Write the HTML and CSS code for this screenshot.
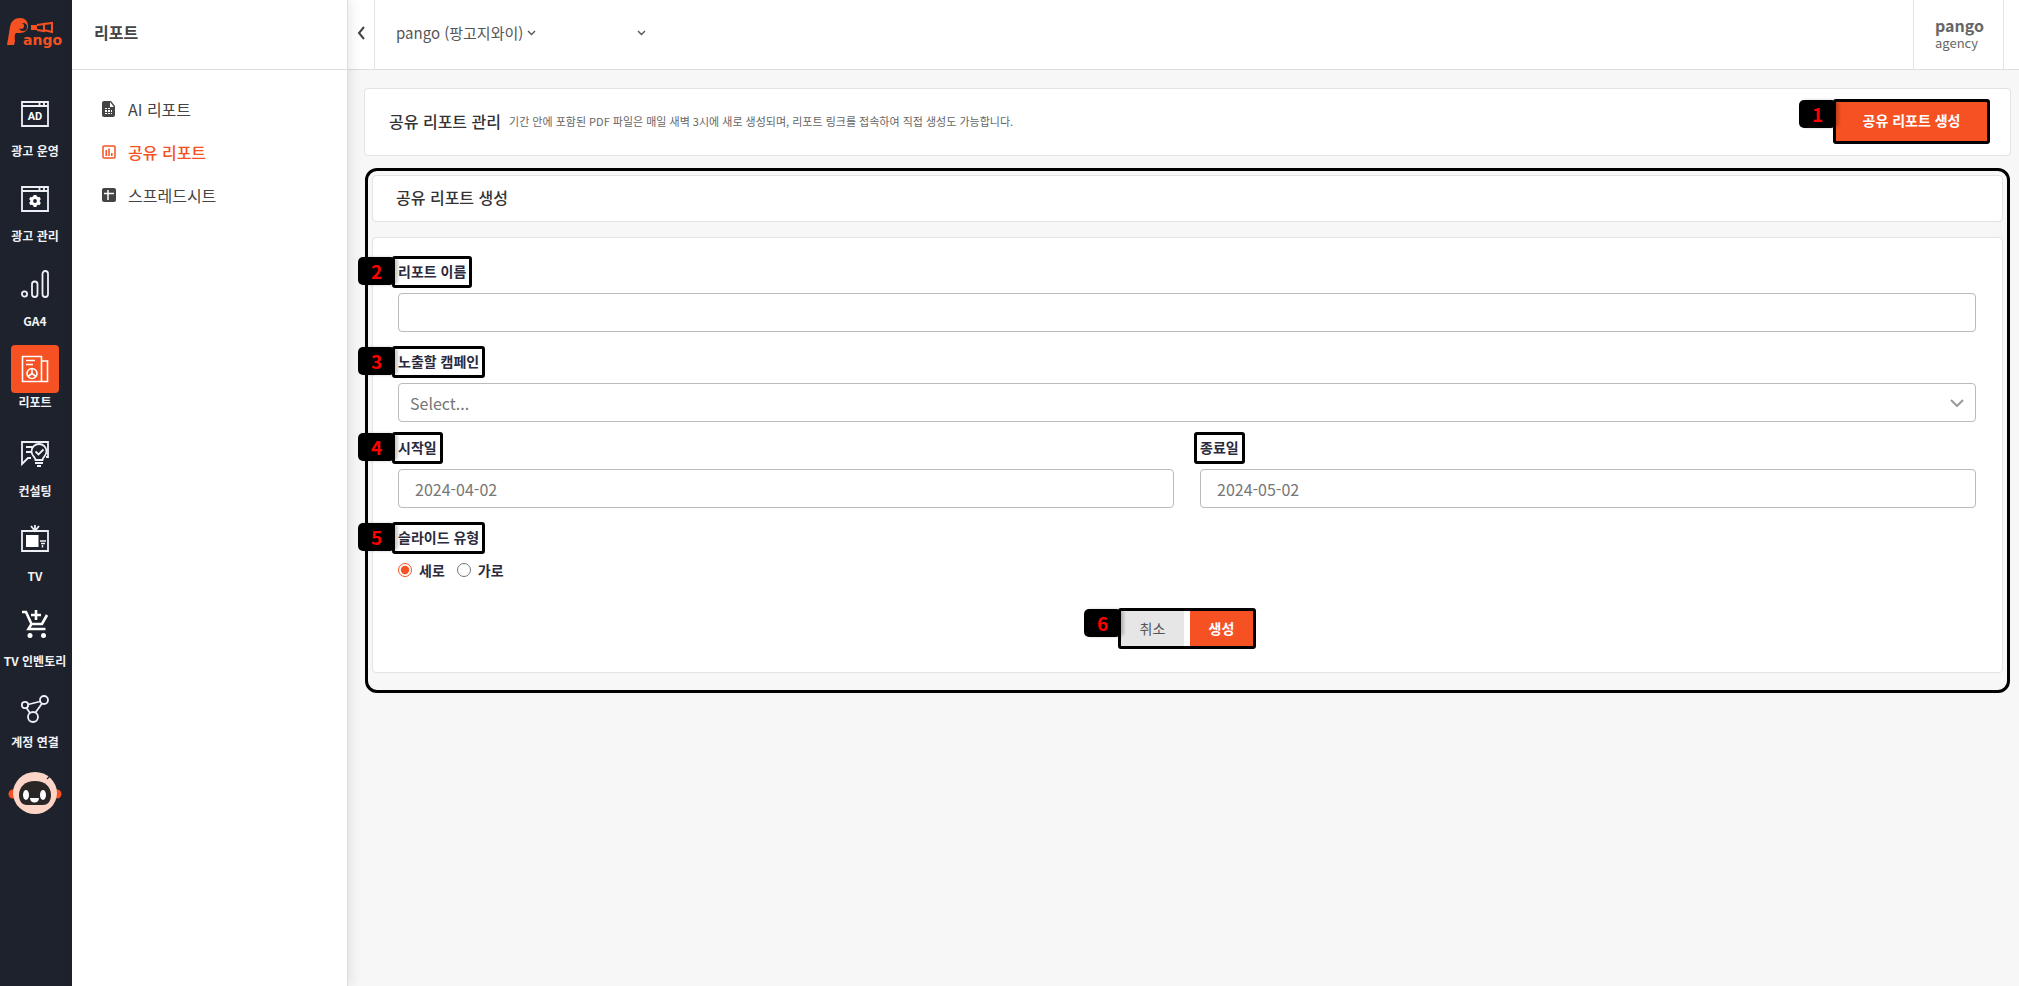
FILE: index.html
```html
<!DOCTYPE html>
<html lang="ko">
<head>
    <meta charset="UTF-8">
    <meta name="viewport" content="width=device-width, initial-scale=1.0">
    <title>공유 리포트 - pango</title>
    <link rel="stylesheet" href="styles.css">
</head>
<body>
    <div class="app">

        <!-- Main navigation -->
        <nav class="sidebar">
            <a class="logo" href="#">
                <svg width="60" height="36" viewBox="0 0 60 36" aria-label="Pango">
                    <path fill="#f55122" d="M1 28 L4 10 C5 4 9 1 14 1 C19 1 22 4 22 9 C22 13 19 16 14 16 L10 16 C8 18 9 21 9 24 L8 28 Z"/>
                    <circle cx="17" cy="10" r="4" fill="#1e222d"/>
                    <circle cx="15" cy="9" r="3" fill="#f55122"/>
                    <path fill="#f55122" d="M25 8h6v5h-6z"/>
                    <path fill="none" stroke="#f55122" stroke-width="2" d="M31 8l7-1v7l-7-1M38 7l8-1v9l-8-2"/>
                    <text x="17" y="28" class="logo-text">ango</text>
                </svg>
            </a>
            <ul class="nav-list">
                <li>
                    <a class="nav-item" href="#">
                        <span class="nav-icon">
                            <svg width="28" height="28" viewBox="0 0 28 28">
                                <path fill="none" stroke="#eef0f6" stroke-width="1.8" d="M1 2h26v24H1zM1 6h26M18.500 2v4M23 2v4"/>
                                <text x="14" y="20" text-anchor="middle" class="icon-text">AD</text>
                            </svg>
                        </span>
                        <span class="nav-label">광고 운영</span>
                    </a>
                </li>
                <li>
                    <a class="nav-item" href="#">
                        <span class="nav-icon">
                            <svg width="28" height="28" viewBox="0 0 28 28">
                                <path fill="none" stroke="#eef0f6" stroke-width="1.8" d="M1 2h26v24H1zM1 6h26M18.500 2v4M23 2v4"/>
                                <circle cx="14" cy="16" r="3.4" fill="none" stroke="#fff" stroke-width="3"/>
                                <path stroke="#fff" stroke-width="3" d="M14 10v2M14 20v2M8.800 13l1.700 1M17.500 18l1.700 1M8.800 19l1.700-1M17.500 14l1.700-1"/>
                            </svg>
                        </span>
                        <span class="nav-label">광고 관리</span>
                    </a>
                </li>
                <li>
                    <a class="nav-item" href="#">
                        <span class="nav-icon">
                            <svg width="28" height="28" viewBox="0 0 28 28" fill="none" stroke="#eef0f6" stroke-width="1.800">
                                <circle cx="3.500" cy="24" r="2.600"/>
                                <rect x="11" y="11.500" width="5.500" height="15.500" rx="2.700"/>
                                <rect x="21.500" y="1" width="5.500" height="26" rx="2.700"/>
                            </svg>
                        </span>
                        <span class="nav-label">GA4</span>
                    </a>
                </li>
                <li>
                    <a class="nav-item active" href="#">
                        <span class="nav-icon">
                            <svg width="28" height="28" viewBox="0 0 28 28" fill="none" stroke="#fff" stroke-width="1.600">
                                <path d="M1.500 1.500h19v25h-19zM20.500 6h6v20.500h-6M5 5.500h9M5 9.500h7"/>
                                <circle cx="11" cy="18.500" r="5"/>
                                <path d="M11 13.500v5l-4 3M11 18.500l4 3"/>
                            </svg>
                        </span>
                        <span class="nav-label">리포트</span>
                    </a>
                </li>
                <li>
                    <a class="nav-item" href="#">
                        <span class="nav-icon">
                            <svg width="28" height="28" viewBox="0 0 28 28" fill="none" stroke="#eef0f6" stroke-width="1.800">
                                <path d="M10 18H7l-6 6V2h26v15h-2M5 7h7M5 12h5"/>
                                <path d="M14.500 20c0-3-4-4-4-8.500a7.500 7.500 0 0 1 15 0c0 4.500-4 5.500-4 8.500zM14 23h8M16 26h4"/>
                                <path d="M14.500 11.500l3 3l5-5"/>
                            </svg>
                        </span>
                        <span class="nav-label">컨설팅</span>
                    </a>
                </li>
                <li>
                    <a class="nav-item" href="#">
                        <span class="nav-icon">
                            <svg width="28" height="28" viewBox="0 0 28 28">
                                <path fill="none" stroke="#eef0f6" stroke-width="1.800" d="M1 6h26v20H1zM10 1l4 5l4-5M14 0v6"/>
                                <path fill="#fff" d="M5 10h12.500v12H5z"/>
                                <path fill="none" stroke="#eef0f6" stroke-width="1.400" d="M19 16h6M20 18.500h4M21.500 20v2.500"/>
                            </svg>
                        </span>
                        <span class="nav-label">TV</span>
                    </a>
                </li>
                <li>
                    <a class="nav-item" href="#">
                        <span class="nav-icon">
                            <svg width="28" height="28" viewBox="0 0 28 28">
                                <path fill="none" stroke="#fff" stroke-width="2.600" d="M1 2h4l5.500 12h10.500L26 5M10.500 14l-3 5h17M15 0v10M10 5h10"/>
                                <circle cx="9" cy="25.500" r="2.500" fill="#fff"/>
                                <circle cx="22.500" cy="25.500" r="2.500" fill="#fff"/>
                            </svg>
                        </span>
                        <span class="nav-label">TV 인벤토리</span>
                    </a>
                </li>
                <li>
                    <a class="nav-item compact" href="#">
                        <span class="nav-icon">
                            <svg width="28" height="28" viewBox="0 0 28 28" fill="none" stroke="#eef0f6" stroke-width="1.800">
                                <circle cx="4" cy="10" r="3.200"/>
                                <circle cx="23" cy="5" r="4"/>
                                <circle cx="12" cy="22" r="5"/>
                                <path d="M7 9.500l12-3M5.500 13l3.500 5M21 8.500l-6.500 9"/>
                            </svg>
                        </span>
                        <span class="nav-label">계정 연결</span>
                    </a>
                </li>
            </ul>
            <button class="bot-button" type="button" aria-label="챗봇">
                <svg width="54" height="44" viewBox="0 0 54 44">
                    <circle cx="5" cy="23" r="4.500" fill="#f55122"/>
                    <circle cx="49" cy="23" r="4.500" fill="#f55122"/>
                    <ellipse cx="27" cy="22" rx="22" ry="21" fill="#fdd5c6"/>
                    <path fill="#2a2626" d="M27 10c10 0 16 6 16 14c0 7-4 10-8 10H19c-5 0-8-4-8-10c0-8 6-14 16-14z"/>
                    <ellipse cx="18" cy="24" rx="3" ry="5" fill="#fff"/>
                    <ellipse cx="35" cy="24" rx="3" ry="5" fill="#fff"/>
                    <path fill="#fff" d="M22 27h9c0 6-9 6-9 0z"/>
                    <path stroke="#2a2626" stroke-width="1.200" d="M39 8l3-3"/>
                </svg>
            </button>
        </nav>

        <!-- Report sub menu -->
        <aside class="submenu">
            <h1 class="submenu-title">리포트</h1>
            <ul class="submenu-list">
                <li>
                    <a class="submenu-item" href="#">
                        <svg width="14" height="16" viewBox="0 0 14 16">
                            <path fill="#444" d="M2 0h7l4 5v9a2 2 0 0 1-2 2H2a2 2 0 0 1-2-2V2a2 2 0 0 1 2-2z"/>
                            <path fill="#fff" d="M8 1v5h4zM3 7h2v1H3zM6 7h2v1H6zM3 9h2v2H3zM6 9h2v2H6zM9 9h1v2H9zM3 12h2v1H3zM6 12h2v1H6zM9 12h1v1H9z"/>
                        </svg>
                        AI 리포트
                    </a>
                </li>
                <li>
                    <a class="submenu-item active" href="#">
                        <svg width="14" height="14" viewBox="0 0 14 14" fill="none" stroke="currentColor" stroke-width="1.500">
                            <rect x="1" y="1" width="12" height="12" rx="1"/>
                            <path d="M4.200 5v6M7 3.500v7.500M9.800 8v3"/>
                        </svg>
                        공유 리포트
                    </a>
                </li>
                <li>
                    <a class="submenu-item" href="#">
                        <svg width="14" height="14" viewBox="0 0 14 14">
                            <rect width="14" height="14" rx="2" fill="#444"/>
                            <path stroke="#fff" stroke-width="1.500" d="M2 5.500h10M6 2v10"/>
                        </svg>
                        스프레드시트
                    </a>
                </li>
            </ul>
        </aside>

        <div class="content">
            <header class="topbar">
                <button class="collapse-button" type="button" aria-label="메뉴 접기">
                    <svg width="8" height="14" viewBox="0 0 8 14"><path fill="none" stroke="#444" stroke-width="2" d="M7 1L2 7l5 6"/></svg>
                </button>
                <button class="account-button" type="button">
                    pango (팡고지와이)
                    <svg width="9" height="6" viewBox="0 0 9 6"><path fill="none" stroke="#555" stroke-width="1.400" d="M1 1l3.500 3.500L8 1"/></svg>
                </button>
                <button class="account-button" type="button" aria-label="계정 선택">
                    <svg width="9" height="6" viewBox="0 0 9 6"><path fill="none" stroke="#555" stroke-width="1.400" d="M1 1l3.500 3.500L8 1"/></svg>
                </button>
                <div class="user-info">
                    <strong>pango</strong>
                    <span>agency</span>
                </div>
            </header>

            <main class="main">
                <section class="card page-head">
                    <h2 class="card-title">공유 리포트 관리</h2>
                    <p class="page-desc">기간 안에 포함된 PDF 파일은 매일 새벽 3시에 새로 생성되며, 리포트 링크를 접속하여 직접 생성도 가능합니다.</p>
                    <div class="mark mark-create">
                        <span class="badge">1</span>
                        <button class="btn btn-primary" type="button">공유 리포트 생성</button>
                    </div>
                </section>

                <section class="guide-frame">
                    <div class="card form-head">
                        <h2 class="card-title">공유 리포트 생성</h2>
                    </div>

                    <form class="card form-body">
                        <div class="field">
                            <label class="mark" for="report-name"><span class="badge">2</span>리포트 이름</label>
                            <input class="control" type="text" id="report-name">
                        </div>

                        <div class="field field-tight">
                            <label class="mark" for="campaign"><span class="badge">3</span>노출할 캠페인</label>
                            <div class="select-wrap">
                                <select class="control" id="campaign">
                                    <option>Select...</option>
                                </select>
                                <svg class="select-arrow" width="14" height="8" viewBox="0 0 14 8"><path fill="none" stroke="#999" stroke-width="2" d="M1 1l6 6l6-6"/></svg>
                            </div>
                        </div>

                        <div class="date-row">
                            <div class="field">
                                <label class="mark" for="start-date"><span class="badge">4</span>시작일</label>
                                <input class="control" type="text" id="start-date" value="2024-04-02">
                            </div>
                            <div class="field">
                                <label class="mark" for="end-date">종료일</label>
                                <input class="control" type="text" id="end-date" value="2024-05-02">
                            </div>
                        </div>

                        <fieldset class="slide-type">
                            <legend class="mark"><span class="badge">5</span>슬라이드 유형</legend>
                            <div class="radio-row">
                                <label class="radio"><input type="radio" name="slide" checked>세로</label>
                                <label class="radio"><input type="radio" name="slide">가로</label>
                            </div>
                        </fieldset>

                        <div class="mark mark-actions">
                            <span class="badge">6</span>
                            <button class="btn btn-cancel" type="button">취소</button>
                            <button class="btn btn-primary" type="submit">생성</button>
                        </div>
                    </form>
                </section>
            </main>
        </div>
    </div>
</body>
</html>
```
FILE: styles.css
```css
/* General Setup */
:root {
    --primary-color: #f55122;
    --sidebar-color: #1e222d;
    --line-color: #e3e3e3;
    --page-bg-color: #f7f7f7;
    --text-color: #444;
}

* {
    box-sizing: border-box;
}

body {
    margin: 0;
    font-family: "Noto Sans CJK KR", "Noto Sans", sans-serif;
    font-size: 16px;
    line-height: 24px;
    color: var(--text-color);
    background-color: var(--page-bg-color);
}

h1, h2, p, ul {
    margin: 0;
    padding: 0;
}

ul {
    list-style: none;
}

a {
    color: inherit;
    text-decoration: none;
}

button, input, select {
    font-family: inherit;
    font-size: inherit;
    color: inherit;
}

button {
    cursor: pointer;
}

.app {
    display: flex;
    min-height: 100vh;
}

/* Main navigation */
.sidebar {
    flex: 0 0 72px;
    display: flex;
    flex-direction: column;
    align-items: center;
    background-color: var(--sidebar-color);
}

.logo {
    height: 90px;
    padding-top: 17px;
}

.logo svg {
    display: block;
}

.logo-text {
    font-family: "DejaVu Sans", sans-serif;
    font-size: 14px;
    font-weight: bold;
    fill: var(--primary-color);
}

.icon-text {
    font-family: Roboto, sans-serif;
    font-size: 11px;
    font-weight: bold;
    fill: #fff;
}

.nav-item {
    display: flex;
    flex-direction: column;
    align-items: center;
    gap: 4px;
    height: 85px;
    padding-right: 2px;
}

.nav-icon {
    display: flex;
    align-items: center;
    justify-content: center;
    width: 48px;
    height: 48px;
    border-radius: 4px;
}

.nav-label {
    font-size: 12px;
    font-weight: bold;
    line-height: 18px;
    color: #f1f2f6;
    white-space: nowrap;
}

.nav-item.active,
.nav-item.compact {
    gap: 0;
}

.nav-item.active .nav-icon {
    background-color: var(--primary-color);
}

.bot-button {
    padding: 0 2px 0 0;
    margin-top: 1px;
    border: none;
    background: none;
}

/* Sub menu */
.submenu {
    flex: 0 0 276px;
    border-right: 1px solid #ddd;
    background-color: #fff;
    box-shadow: 2px 0 12px rgba(0, 0, 0, 0.1);
    z-index: 1;
}

.submenu-title {
    height: 70px;
    padding: 20px 22px;
    border-bottom: 1px solid #ddd;
    font-size: 16px;
    font-weight: bold;
}

.submenu-list {
    padding: 17px 28px;
}

.submenu-item {
    display: flex;
    align-items: center;
    gap: 12px;
    height: 43px;
    padding-left: 2px;
}

.submenu-item.active {
    color: var(--primary-color);
    font-weight: 500;
}

/* Top bar */
.content {
    flex: 1;
    min-width: 0;
}

.topbar {
    display: flex;
    align-items: stretch;
    height: 70px;
    padding-right: 15px;
    border-bottom: 1px solid #ddd;
    background-color: #fff;
}

.collapse-button {
    width: 27px;
    margin-right: 14px;
    padding: 0 0 4px;
    border: none;
    border-right: 1px solid var(--line-color);
    background: none;
}

.account-button {
    display: flex;
    align-items: center;
    gap: 4px;
    padding: 0 94px 4px 7px;
    border: none;
    background: none;
    font-size: 15px;
    color: #555;
}

.user-info {
    display: flex;
    flex-direction: column;
    justify-content: center;
    width: 91px;
    margin-left: auto;
    padding: 0 20px 2px 21px;
    border: 1px solid var(--line-color);
    border-width: 0 1px;
    line-height: 18px;
    color: #666;
}

.user-info span {
    font-size: 13px;
}

/* Cards */
.main {
    padding: 18px 8px 18px 16px;
}

.card {
    border: 1px solid var(--line-color);
    border-radius: 4px;
    background-color: #fff;
}

.card-title {
    font-size: 16px;
    font-weight: 500;
    color: #333;
}

.page-head {
    display: flex;
    align-items: center;
    gap: 8px;
    height: 68px;
    padding: 0 20px 2px 24px;
}

.page-desc {
    font-size: 11px;
    color: #666;
}

/* Numbered guide marks */
.mark {
    position: relative;
    display: inline-flex;
    align-items: center;
    border: 3px solid #000;
    border-radius: 3px;
}

.badge {
    position: absolute;
    top: -2px;
    right: 100%;
    width: 37px;
    height: 28px;
    border-radius: 5px;
    background-color: #000;
    box-shadow: 3px 0 3px rgba(0, 0, 0, 0.2);
    font-size: 19px;
    font-weight: bold;
    line-height: 28px;
    text-align: center;
    color: #f00;
}

.mark-create {
    margin-left: auto;
}

.guide-frame {
    margin: 12px 1px 0;
    padding: 4px 4px 17px;
    border: 3px solid #000;
    border-radius: 12px;
}

.form-head {
    height: 47px;
    margin-bottom: 15px;
    padding: 9px 23px;
}

/* Form */
.form-body {
    display: flex;
    flex-direction: column;
    padding: 18px 26px 23px 25px;
}

.field {
    display: flex;
    flex: 1;
    flex-direction: column;
    align-items: flex-start;
    gap: 5px;
    margin-bottom: 14px;
}

.field-tight {
    margin-bottom: 10px;
}

label.mark,
legend.mark {
    height: 32px;
    margin-left: -6px;
    padding: 0 3px 2px;
    font-size: 14px;
    font-weight: bold;
    color: #2b2b3d;
}

.control {
    width: 100%;
    height: 39px;
    padding: 0 16px;
    border: 1px solid #bbb;
    border-radius: 4px;
    background-color: #fff;
    color: #777;
}

.select-wrap {
    position: relative;
    width: 100%;
}

.select-wrap .control {
    display: block;
    padding: 0 11px;
    appearance: none;
}

.select-arrow {
    position: absolute;
    top: 16px;
    right: 12px;
    pointer-events: none;
}

.date-row {
    display: flex;
    gap: 26px;
}

.slide-type {
    margin: 0;
    padding: 0;
    border: none;
}

.radio-row {
    display: flex;
    gap: 12px;
    margin-top: 4px;
}

.radio {
    display: flex;
    align-items: center;
    gap: 7px;
    font-size: 14px;
    font-weight: bold;
    color: #2b2b3d;
}

.radio input {
    width: 14px;
    height: 14px;
    margin: 0;
    accent-color: var(--primary-color);
}

.btn {
    padding: 0 0 2px;
    border: none;
    font-size: 14px;
    color: #555;
}

.btn-primary {
    background-color: var(--primary-color);
    font-weight: bold;
    color: #fff;
}

.mark-create .btn {
    width: 151px;
    height: 39px;
}

.mark-actions {
    align-self: center;
    gap: 6px;
    margin-top: 26px;
}

.mark-actions .btn {
    width: 63px;
    height: 35px;
}

.btn-cancel {
    background-color: #e6e6e6;
}
```
